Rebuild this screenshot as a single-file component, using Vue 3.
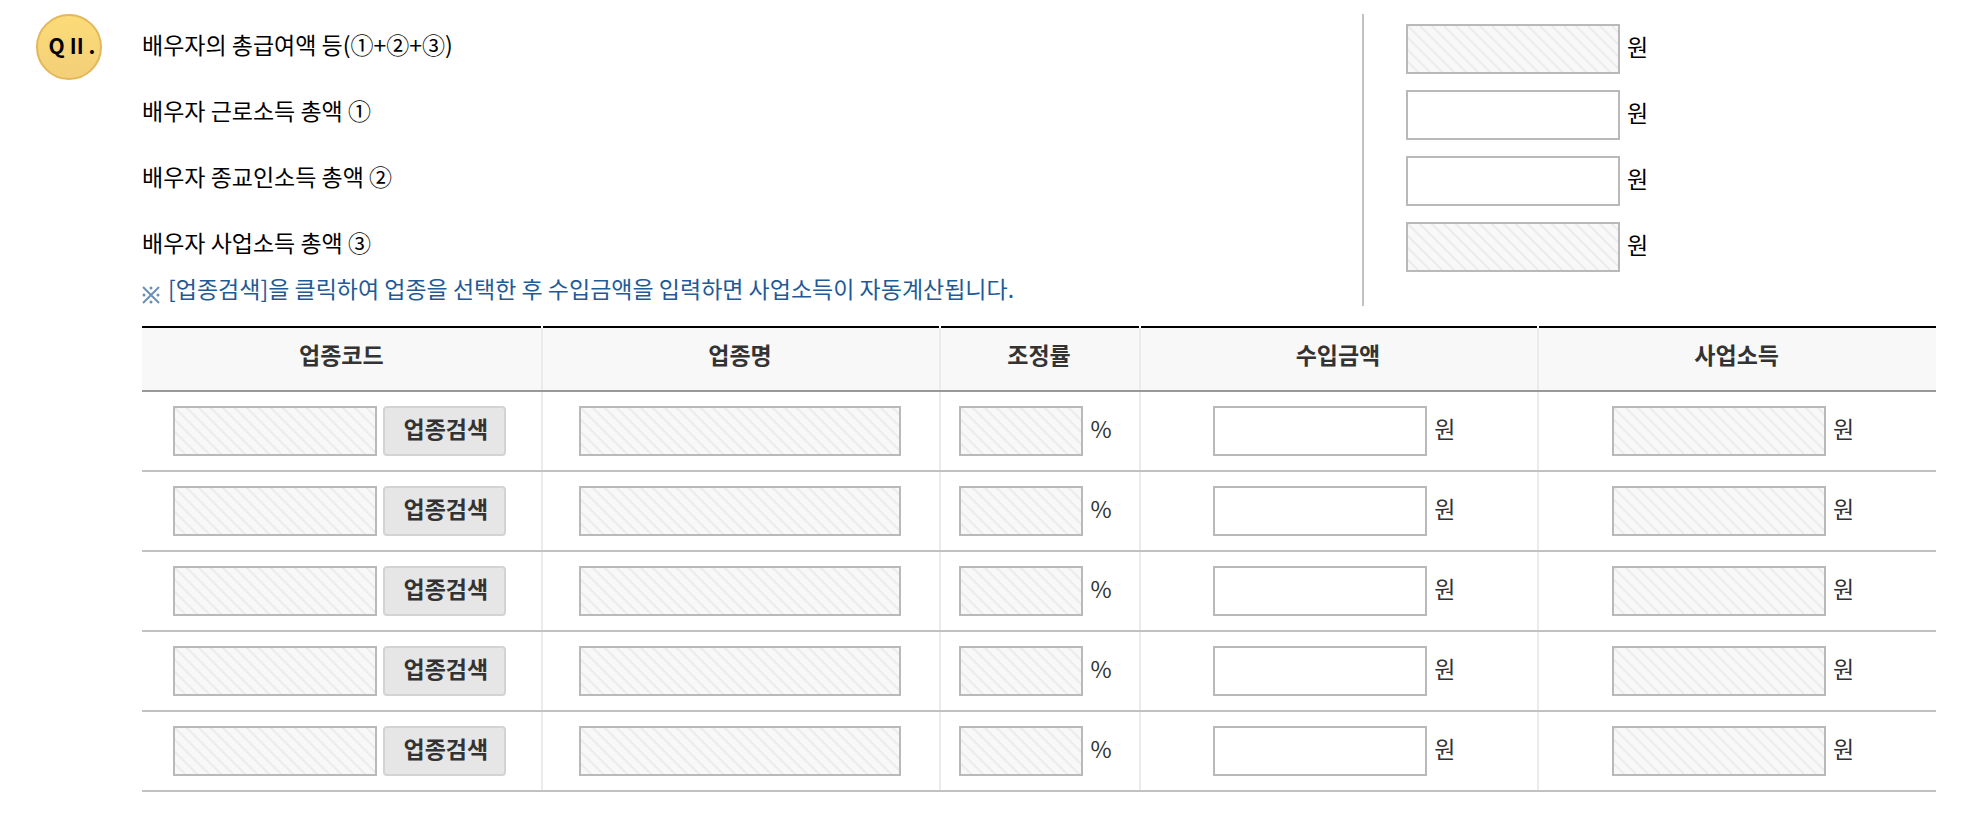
<script setup>
import { ref } from 'vue'

const incomes = ref([
  { id: 'total', label: '배우자의 총급여액 등(①+②+③)', locked: true, value: '' },
  { id: 'labor', label: '배우자 근로소득 총액 ①', locked: false, value: '' },
  { id: 'religious', label: '배우자 종교인소득 총액 ②', locked: false, value: '' },
  { id: 'business', label: '배우자 사업소득 총액 ③', locked: true, value: '' },
])

const rows = ref(
  Array.from({ length: 5 }, (_, i) => ({ id: i + 1, code: '', name: '', rate: '', revenue: '', income: '' }))
)
</script>

<template>
  <main class="question">
    <div class="badge">
      <span>Q</span><span>II</span><span>.</span>
    </div>
    <section class="body">
      <div class="summary">
        <div class="labels">
          <label v-for="item in incomes" :key="item.id" :for="item.id" class="label">{{ item.label }}</label>
          <p class="note">
            <svg class="mark" viewBox="0 0 18 18" aria-hidden="true">
              <path d="M1 1L17 17M17 1L1 17" />
              <circle cx="9" cy="2" r="1.5" />
              <circle cx="9" cy="16" r="1.5" />
              <circle cx="2" cy="9" r="1.5" />
              <circle cx="16" cy="9" r="1.5" />
            </svg>
            <span>[업종검색]을 클릭하여 업종을 선택한 후 수입금액을 입력하면 사업소득이 자동계산됩니다.</span>
          </p>
        </div>
        <div class="amounts">
          <div v-for="item in incomes" :key="item.id" class="field">
            <input :id="item.id" v-model="item.value" class="box money" type="text" :readonly="item.locked" />
            <span class="unit">원</span>
          </div>
        </div>
      </div>

      <table class="grid">
        <colgroup>
          <col class="wide" /><col class="wide" /><col class="narrow" /><col class="wide" /><col class="wide" />
        </colgroup>
        <thead>
          <tr>
            <th scope="col">업종코드</th>
            <th scope="col">업종명</th>
            <th scope="col">조정률</th>
            <th scope="col">수입금액</th>
            <th scope="col">사업소득</th>
          </tr>
        </thead>
        <tbody>
          <tr v-for="row in rows" :key="row.id">
            <td>
              <div class="field">
                <input v-model="row.code" class="box code" type="text" aria-label="업종코드" readonly />
                <button class="search" type="button">업종검색</button>
              </div>
            </td>
            <td>
              <div class="field">
                <input v-model="row.name" class="box name" type="text" aria-label="업종명" readonly />
              </div>
            </td>
            <td>
              <div class="field">
                <input v-model="row.rate" class="box rate" type="text" aria-label="조정률" readonly />
                <span class="unit">%</span>
              </div>
            </td>
            <td>
              <div class="field">
                <input v-model="row.revenue" class="box money" type="text" aria-label="수입금액" />
                <span class="unit">원</span>
              </div>
            </td>
            <td>
              <div class="field">
                <input v-model="row.income" class="box money" type="text" aria-label="사업소득" readonly />
                <span class="unit">원</span>
              </div>
            </td>
          </tr>
        </tbody>
      </table>
    </section>
  </main>
</template>

<style>
body {
  background: #fff;
}
</style>

<style scoped>
.question {
  display: flex;
  align-items: flex-start;
  gap: 40px;
  padding: 14px 26px 48px 36px;
  color: #000;
  font-family: "Noto Sans CJK KR", sans-serif;
  font-size: 23px;
  line-height: 28px;
}
.badge {
  display: flex;
  flex: none;
  align-items: center;
  justify-content: center;
  gap: 5px;
  box-sizing: border-box;
  width: 66px;
  height: 66px;
  padding: 0 0 4px 6px;
  border: 2px solid #e3b75a;
  border-radius: 50%;
  background: linear-gradient(#fbdc78, #f3cf78);
  font-size: 21px;
  font-weight: 700;
}
.body {
  flex: 1;
  min-width: 0;
}
.summary {
  display: flex;
}
.labels {
  display: flex;
  flex: 1;
  flex-direction: column;
}
.label {
  padding-bottom: 6px;
  line-height: 60px;
}
.note {
  display: flex;
  align-items: flex-start;
  gap: 8px;
  height: 28px;
  margin: 0;
  color: #1f5a96;
  line-height: 20px;
}
.mark {
  width: 18px;
  height: 18px;
  margin-top: 8px;
  fill: #6c8fb8;
  stroke: none;
}
.mark path {
  fill: none;
  stroke: #6c8fb8;
  stroke-width: 2;
}
.amounts {
  display: flex;
  flex-direction: column;
  gap: 16px;
  box-sizing: border-box;
  width: 32%;
  padding: 10px 0 0 42px;
  border-left: 2px solid #c1c1c1;
}
.field {
  display: flex;
  align-items: center;
}
.box {
  box-sizing: border-box;
  height: 50px;
  min-width: 0;
  margin: 0;
  padding: 0 10px;
  border: 2px solid #b9b9b9;
  border-radius: 0;
  outline: none;
  background-color: #fff;
  color: #333;
  font: inherit;
  text-align: right;
}
.box:read-only {
  background: linear-gradient(45deg, #ebebeb 3%, #f8f8f8 9%, #f8f8f8 41%, #ebebeb 47%, #ebebeb 53%, #f8f8f8 59%, #f8f8f8 91%, #ebebeb 97%) 0 0 / 12px 12px;
}
.money {
  width: 214px;
}
.code {
  width: 204px;
}
.name {
  width: 81%;
}
.rate {
  width: 124px;
}
.unit {
  margin: 0 7px;
  padding-bottom: 6px;
}
.search {
  box-sizing: border-box;
  height: 50px;
  margin: 0 4px 0 6px;
  padding: 0 16px 6px 19px;
  border: 2px solid #d3d3d3;
  border-radius: 4px;
  background: #e6e6e6;
  color: #333;
  font: inherit;
  font-weight: 700;
  cursor: pointer;
}
.grid {
  width: 100%;
  margin-top: 20px;
  border-collapse: separate;
  border-spacing: 0;
  table-layout: fixed;
  color: #333;
}
.wide {
  width: 22%;
}
.narrow {
  width: 11%;
}
th {
  position: relative;
  height: 48px;
  padding: 2px 0 12px;
  border-top: 2px solid #000;
  border-bottom: 2px solid #999;
  background: linear-gradient(#ebebeb, #ebebeb) 0 0 / 2px 100% no-repeat, #f8f8f8;
  font-weight: 700;
}
th + th::before {
  position: absolute;
  top: -2px;
  left: 0;
  width: 2px;
  height: 2px;
  background: #fff;
  content: "";
}
td {
  padding: 14px 0;
  border-bottom: 2px solid #c1c1c1;
  background: linear-gradient(#ebebeb, #ebebeb) 0 0 / 2px 100% no-repeat;
}
th:first-child {
  background: #f8f8f8;
}
td:first-child {
  background: none;
}
td .field {
  justify-content: center;
}
</style>
